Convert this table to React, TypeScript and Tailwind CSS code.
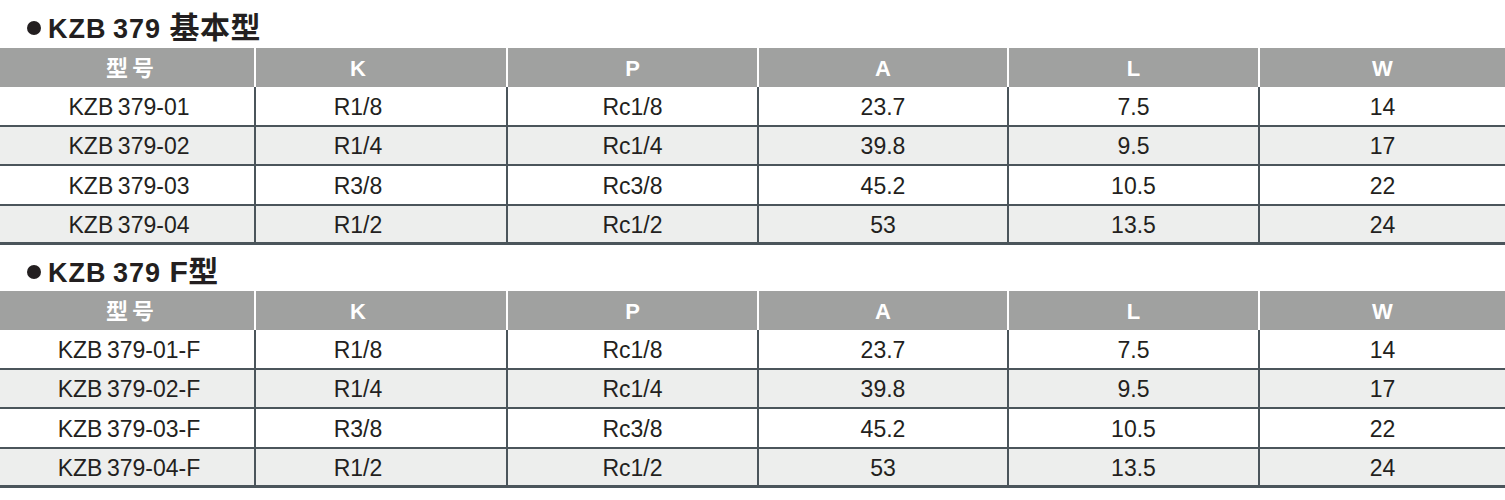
const columns = ['型号', 'K', 'P', 'A', 'L', 'W'];

const sizes = [
    { k: 'R1/8', p: 'Rc1/8', a: '23.7', l: '7.5', w: '14' },
    { k: 'R1/4', p: 'Rc1/4', a: '39.8', l: '9.5', w: '17' },
    { k: 'R3/8', p: 'Rc3/8', a: '45.2', l: '10.5', w: '22' },
    { k: 'R1/2', p: 'Rc1/2', a: '53', l: '13.5', w: '24' },
];

const gridCols = 'grid grid-cols-[254px_252px_251px_250px_251px_1fr]';

function SectionTitle({ code, kind, tall }: { code: string; kind: string; tall?: boolean }) {
    return (
        <div className={`flex items-center pl-[27px] pt-[8px] text-[#231f20] ${tall ? 'h-[48px]' : 'h-[46px]'}`}>
            <span className="mr-[7px] h-[14px] w-[14px] shrink-0 rounded-full bg-[#231f20]" />
            <h2 className="text-[27px] font-bold leading-none tracking-[1px]">
                {code} <span className="text-[30px] tracking-[0.5px]">{kind}</span>
            </h2>
        </div>
    );
}

function SpecTable({ suffix }: { suffix: string }) {
    return (
        <div>
            <div className={`${gridCols} h-[39px] bg-[#a0a1a0] text-[22px] font-bold text-white`}>
                {columns.map((col, i) => (
                    <div
                        key={col}
                        className={`flex items-center justify-center pt-[1px] ${i > 0 ? 'border-l-2 border-white' : ''} ${i === 1 ? 'pr-[46px]' : ''} ${i === 0 ? 'pl-[10px] tracking-[4px]' : ''}`}
                    >
                        {col}
                    </div>
                ))}
            </div>
            {sizes.map((row, r) => {
                const cells = [`KZB\u2009379-0${r + 1}${suffix}`, row.k, row.p, row.a, row.l, row.w];
                const last = r === sizes.length - 1;
                return (
                    <div
                        key={r}
                        className={`${gridCols} h-[39.5px] border-[#4b555b] text-[23px] text-[#231f20] ${last ? 'border-b-[3px]' : 'border-b-2'} ${r % 2 === 1 ? 'bg-[#edeeed]' : 'bg-white'}`}
                    >
                        {cells.map((c, i) => (
                            <div
                                key={i}
                                className={`flex items-center justify-center pt-[2px] ${i > 0 ? 'border-l-2 border-[#4b555b]' : ''} ${i === 1 ? 'pr-[46px]' : ''} ${i === 0 ? 'pl-[4px]' : ''}`}
                            >
                                {c}
                            </div>
                        ))}
                    </div>
                );
            })}
        </div>
    );
}

export default function App() {
    return (
        <div
            className="h-[500px] w-[1505px] bg-white"
            style={{ fontFamily: '"Liberation Sans", Arial, "Noto Sans CJK SC", sans-serif' }}
        >
            <SectionTitle code={'KZB\u2009379'} kind="基本型" tall />
            <SpecTable suffix="" />
            <SectionTitle code={'KZB\u2009379'} kind="F型" />
            <SpecTable suffix="-F" />
        </div>
    );
}
